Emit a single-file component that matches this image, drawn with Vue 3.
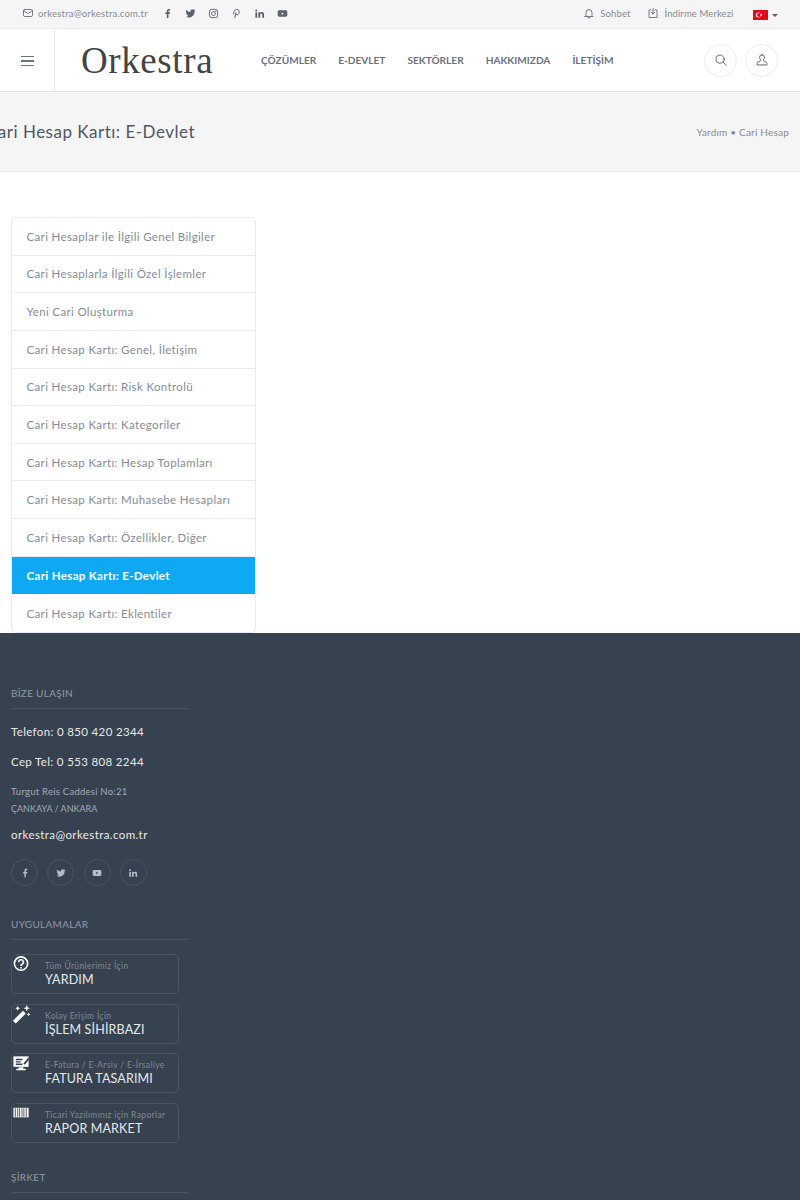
<template>
  <div class="page">
    <div class="topbar">
      <div class="top-left">
        <svg class="ico mail" viewBox="0 0 24 24"><rect x="3" y="5" width="18" height="14" rx="2.5" /><path d="M3.5 7.5 12 13l8.500-5.500" /></svg>
        <span class="top-mail">orkestra@orkestra.com.tr</span>
        <div class="top-social">
          <svg viewBox="0 0 24 24"><path class="fill" d="M14 22v-9h3l.5-3.600H14V7.200c0-1 .3-1.700 1.800-1.700h1.800V2.300C17.200 2.200 16.200 2 15 2c-2.700 0-4.500 1.600-4.500 4.700v2.700h-3V13h3v9z" /></svg>
          <svg viewBox="0 0 24 24"><path class="fill" d="M23 5.100c-.8.4-1.700.6-2.600.7.900-.6 1.600-1.400 2-2.500-.9.500-1.900.9-2.900 1.100a4.500 4.500 0 0 0-7.700 4.100C8 8.300 4.700 6.500 2.500 3.800a4.500 4.500 0 0 0 1.400 6c-.7 0-1.400-.2-2-.6 0 2.200 1.500 4 3.600 4.500-.7.200-1.400.2-2 .1.600 1.800 2.200 3.100 4.200 3.100A9 9 0 0 1 1 18.800 12.800 12.800 0 0 0 20.700 7.400c.9-.6 1.700-1.400 2.300-2.300z" /></svg>
          <svg class="line" viewBox="0 0 24 24"><rect x="3" y="3" width="18" height="18" rx="5" /><circle cx="12" cy="12" r="4.200" /><circle cx="17.200" cy="6.800" r=".6" /></svg>
          <svg class="line" viewBox="0 0 24 24"><path d="M8 22l3-12.500M6.200 14C4.500 8.500 8 3 12.500 3c3.800 0 5.800 2.800 5.500 6-.3 3.400-2.200 5.800-4.500 5.800-1.500 0-2.700-.9-3.300-2.200" /></svg>
          <svg viewBox="0 0 24 24"><path class="fill" d="M3 9h4v12H3zM5 3a2.200 2.200 0 1 1 0 4.400A2.200 2.200 0 0 1 5 3zM9.500 9h3.800v1.700c.6-1 1.900-2 3.900-2 4 0 4.800 2.600 4.800 6V21h-4v-5.500c0-1.400 0-3.100-1.900-3.100s-2.600 1.400-2.600 3V21h-4z" /></svg>
          <svg viewBox="0 0 24 24"><path class="fill" d="M5 5h14c2 0 3.500 1.500 3.500 3.500v7c0 2-1.500 3.500-3.500 3.500H5c-2 0-3.500-1.500-3.500-3.500v-7C1.500 6.500 3 5 5 5zm5 4v6l5-3z" fill-rule="evenodd" /></svg>
        </div>
      </div>
      <div class="top-right">
        <span class="top-link chat">
          <svg class="ico" viewBox="0 0 24 24"><path d="M6 17V11a6 6 0 0 1 12 0v6l2 2H4zM10 21.500h4" /></svg>
          Sohbet
        </span>
        <span class="top-link">
          <svg class="ico" viewBox="0 0 24 24"><path d="M8 6H4v15h16V6h-4M12 3v11M8.500 10.500 12 14l3.500-3.500" /></svg>
          İndirme Merkezi
        </span>
        <span class="lang">
          <svg class="flag" viewBox="0 0 15 10"><rect width="15" height="10" fill="#e30a17" /><circle cx="5.400" cy="5" r="2.500" fill="#fff" /><circle cx="6" cy="5" r="2" fill="#e30a17" /><circle cx="8.300" cy="5" r=".9" fill="#fff" /></svg>
          <i class="caret"></i>
        </span>
      </div>
    </div>

    <header class="header">
      <div class="burger">
        <span></span><span></span><span></span>
      </div>
      <div class="logo">Orkestra</div>
      <nav class="nav">
        <a v-for="item in navItems" :key="item">{{ item }}</a>
      </nav>
      <div class="header-actions">
        <button class="round">
          <svg class="ico" viewBox="0 0 24 24"><circle cx="10.500" cy="10.500" r="7" /><path d="m16 16 5 5" /></svg>
        </button>
        <button class="round">
          <svg class="ico" viewBox="0 0 24 24"><path d="M12 3a4.200 4.200 0 0 0-4.200 4.200c0 2 1 3.300 1.700 4.300.6 1 .2 2-1 2.500L5 15.500c-1 .5-1.500 1.200-1.500 2.500v2.500h17V18c0-1.300-.5-2-1.500-2.500L15.500 14c-1.200-.5-1.600-1.500-1-2.500.7-1 1.700-2.300 1.700-4.300A4.200 4.200 0 0 0 12 3z" /></svg>
        </button>
      </div>
    </header>

    <section class="title-bar">
      <h1>Cari Hesap Kartı: E-Devlet</h1>
      <div class="crumbs">Yardım <b>•</b> Cari Hesap</div>
    </section>

    <main class="content">
      <ul class="side-list">
        <li v-for="item in listItems" :key="item" :class="{ active: item === activeItem }">{{ item }}</li>
      </ul>
    </main>

    <footer class="footer">
      <div class="foot-col">
        <h4>BİZE ULAŞIN</h4>
        <p class="phone">Telefon: 0 850 420 2344</p>
        <p class="phone">Cep Tel: 0 553 808 2244</p>
        <p class="address">Turgut Reis Caddesi No:21<br /><span>ÇANKAYA / ANKARA</span></p>
        <p class="foot-mail">orkestra@orkestra.com.tr</p>
        <div class="foot-social">
          <span><svg viewBox="0 0 24 24"><path d="M14 22v-9h3l.5-3.600H14V7.200c0-1 .3-1.700 1.800-1.700h1.800V2.300C17.200 2.200 16.200 2 15 2c-2.700 0-4.500 1.600-4.500 4.700v2.700h-3V13h3v9z" /></svg></span>
          <span><svg viewBox="0 0 24 24"><path d="M23 5.100c-.8.4-1.700.6-2.600.7.900-.6 1.600-1.400 2-2.500-.9.500-1.900.9-2.900 1.100a4.500 4.500 0 0 0-7.700 4.100C8 8.300 4.700 6.500 2.500 3.800a4.500 4.500 0 0 0 1.400 6c-.7 0-1.400-.2-2-.6 0 2.200 1.500 4 3.600 4.500-.7.200-1.400.2-2 .1.600 1.800 2.200 3.100 4.200 3.100A9 9 0 0 1 1 18.800 12.800 12.800 0 0 0 20.700 7.400c.9-.6 1.700-1.400 2.300-2.300z" /></svg></span>
          <span><svg viewBox="0 0 24 24"><path fill-rule="evenodd" d="M5 5h14c2 0 3.500 1.500 3.500 3.500v7c0 2-1.500 3.500-3.500 3.500H5c-2 0-3.500-1.500-3.500-3.500v-7C1.500 6.500 3 5 5 5zm5 4v6l5-3z" /></svg></span>
          <span><svg viewBox="0 0 24 24"><path d="M3 9h4v12H3zM5 3a2.200 2.200 0 1 1 0 4.400A2.200 2.200 0 0 1 5 3zM9.500 9h3.800v1.700c.6-1 1.900-2 3.900-2 4 0 4.800 2.600 4.800 6V21h-4v-5.500c0-1.400 0-3.100-1.900-3.100s-2.600 1.400-2.600 3V21h-4z" /></svg></span>
        </div>

        <h4 class="apps-title">UYGULAMALAR</h4>
        <div class="apps">
          <div v-for="app in apps" :key="app.name" class="app">
            <svg class="app-ico" viewBox="0 0 20 20" v-html="app.icon"></svg>
            <small>{{ app.sub }}</small>
            <strong>{{ app.name }}</strong>
          </div>
        </div>

        <h4 class="company-title">ŞİRKET</h4>
      </div>
    </footer>
  </div>
</template>

<script setup>
const navItems = ['ÇÖZÜMLER', 'E-DEVLET', 'SEKTÖRLER', 'HAKKIMIZDA', 'İLETİŞİM']

const activeItem = 'Cari Hesap Kartı: E-Devlet'
const listItems = [
  'Cari Hesaplar ile İlgili Genel Bilgiler',
  'Cari Hesaplarla İlgili Özel İşlemler',
  'Yeni Cari Oluşturma',
  'Cari Hesap Kartı: Genel, İletişim',
  'Cari Hesap Kartı: Risk Kontrolü',
  'Cari Hesap Kartı: Kategoriler',
  'Cari Hesap Kartı: Hesap Toplamları',
  'Cari Hesap Kartı: Muhasebe Hesapları',
  'Cari Hesap Kartı: Özellikler, Diğer',
  'Cari Hesap Kartı: E-Devlet',
  'Cari Hesap Kartı: Eklentiler',
]

const apps = [
  {
    sub: 'Tüm Ürünlerimiz İçin',
    name: 'YARDIM',
    icon: '<circle cx="9.500" cy="9" r="7" fill="none" stroke="#fff" stroke-width="1.7"/><path d="M7 7.500a2.500 2.500 0 1 1 3.700 2.200c-.8.500-1.200.9-1.200 1.800" fill="none" stroke="#fff" stroke-width="1.700"/><circle cx="9.500" cy="13.500" r="1" fill="#fff"/>',
  },
  {
    sub: 'Kolay Erişim İçin',
    name: 'İŞLEM SİHİRBAZI',
    icon: '<path d="M1 16.500 11.500 6l3 3L4 19.500z" fill="#fff"/><path d="M15.500 0l1 2.300 2.300 1-2.300 1-1 2.300-1-2.300-2.300-1 2.300-1zM6 1l.8 1.700 1.700.8-1.700.8L6 6l-.8-1.700-1.700-.8 1.700-.8zM17.500 8l.6 1.300 1.300.6-1.300.6-.6 1.300-.6-1.300-1.300-.6 1.300-.6z" fill="#fff"/>',
  },
  {
    sub: 'E-Fatura / E-Arsiv / E-İrsaliye',
    name: 'FATURA TASARIMI',
    icon: '<path d="M1.500 2.500h16v11h-16z" fill="#fff"/><path d="M4 5h7v1.500H4zM4 7.500h5V9H4zM4 10h7v1.500H4z" fill="#36424f"/><path d="M12 10l5-6 1.500 1.200-5 6z" fill="#36424f"/><path d="M7 14h5v1.500h2.500V17h-10v-1.500H7z" fill="#fff"/>',
  },
  {
    sub: 'Ticari Yazılımınız için Raporlar',
    name: 'RAPOR MARKET',
    icon: '<rect x="1.500" y="4" width="16" height="10" fill="#fff"/><path d="M3.500 4.500v9M6 4.500v9M8 4.500v9M10.500 4.500v9M12.500 4.500v9M15 4.500v9" stroke="#555" stroke-width="1"/>',
  },
]
</script>

<style>
html,
body {
  margin: 0;
  background: #fff;
}
</style>

<style scoped>
.page {
  width: 800px;
  height: 1200px;
  overflow: hidden;
  display: flex;
  flex-direction: column;
  font-family: "Lato", "Noto Sans", sans-serif;
  color: #6c757d;
}

.ico {
  width: 12px;
  height: 12px;
  fill: none;
  stroke: #5e6673;
  stroke-width: 1.700;
  stroke-linecap: round;
  stroke-linejoin: round;
}

/* top bar */
.topbar {
  height: 29px;
  flex: none;
  box-sizing: border-box;
  background: #f5f5f5;
  border-bottom: 1px solid #ececec;
  padding: 0 22px 2px;
  display: flex;
  align-items: center;
  justify-content: space-between;
  font-size: 9.500px;
  color: #858c96;
}

.top-left,
.top-right {
  display: flex;
  align-items: center;
}

.top-mail {
  margin-left: 4px;
  letter-spacing: 0.2px;
}

.top-social {
  display: flex;
  align-items: center;
  gap: 12px;
  margin-left: 14px;
}

.top-social svg {
  width: 11px;
  height: 11px;
}

.top-social .fill {
  fill: #59626f;
}

.top-social .line {
  fill: none;
  stroke: #59626f;
  stroke-width: 2;
}

.top-link {
  display: flex;
  align-items: center;
  gap: 5px;
  margin-right: 19.500px;
  letter-spacing: 0.1px;
}

.top-link.chat {
  margin-right: 17px;
}

.lang {
  display: flex;
  align-items: center;
  gap: 4px;
  margin-top: 4px;
}

.flag {
  width: 15px;
  height: 10px;
}

.caret {
  width: 0;
  height: 0;
  border: 3px solid transparent;
  border-top-color: #59626f;
  border-bottom: 0;
}

/* header */
.header {
  height: 63px;
  flex: none;
  box-sizing: border-box;
  background: #fff;
  border-bottom: 1px solid #e3e3e3;
  display: flex;
  align-items: center;
}

.burger {
  width: 55px;
  height: 100%;
  box-sizing: border-box;
  border-right: 1px solid #ececec;
  display: flex;
  flex-direction: column;
  align-items: center;
  justify-content: center;
  gap: 3px;
  padding-top: 2px;
}

.burger span {
  width: 13px;
  height: 1.500px;
  background: #6a717c;
}

.logo {
  width: 206px;
  box-sizing: border-box;
  padding-left: 26px;
  font-family: "Liberation Serif", serif;
  font-size: 37px;
  color: #444;
  letter-spacing: 0.6px;
}

.nav {
  display: flex;
  gap: 22px;
  font-size: 10.100px;
  font-weight: 700;
  color: #6a717c;
}

.header-actions {
  margin-left: auto;
  margin-right: 22px;
  display: flex;
  gap: 8px;
}

.round {
  width: 33px;
  height: 33px;
  padding: 0;
  border: 1px solid #ececec;
  border-radius: 50%;
  background: #fff;
  display: flex;
  align-items: center;
  justify-content: center;
}

.round .ico {
  width: 14px;
  height: 14px;
}

/* title */
.title-bar {
  height: 80px;
  flex: none;
  box-sizing: border-box;
  background: #f5f5f5;
  border-bottom: 1px solid #e7e7e7;
  display: flex;
  align-items: center;
  justify-content: space-between;
  padding-right: 11px;
}

.title-bar h1 {
  margin: 0 0 0 -14px;
  font-size: 17px;
  font-weight: 400;
  color: #4e5763;
  letter-spacing: 0.5px;
}

.crumbs {
  font-size: 10px;
  color: #858c96;
  letter-spacing: 0.2px;
}

.crumbs b {
  font-weight: 400;
}

/* side list */
.content {
  flex: none;
  height: 461px;
  box-sizing: border-box;
  padding: 45px 0 0 11px;
}

.side-list {
  list-style: none;
  margin: 0;
  padding: 0;
  width: 245px;
  box-sizing: border-box;
  border: 1px solid #e9ecef;
  border-radius: 5px;
  overflow: hidden;
}

.side-list li {
  height: 37.650px;
  box-sizing: border-box;
  padding-left: 14.500px;
  display: flex;
  align-items: center;
  font-size: 11.500px;
  letter-spacing: 0.350px;
  color: #858c96;
  border-bottom: 1px solid #e9ecef;
}

.side-list li:last-child {
  border-bottom: 0;
}

.side-list li.active {
  background: #0ea9f2;
  color: #fff;
  font-weight: 700;
  margin: 0 -1px;
  padding-left: 15.500px;
  border-bottom: 0;
}

/* footer */
.footer {
  flex: 1;
  background: #36424f;
  padding: 54px 0 0 11px;
}

.foot-col {
  width: 178px;
}

.foot-col h4 {
  margin: 0;
  padding-bottom: 9px;
  border-bottom: 1px solid #4a5562;
  font-size: 10px;
  font-weight: 400;
  letter-spacing: 0.3px;
  color: #929aa5;
  line-height: 12px;
}

.phone {
  margin: 0;
  font-size: 11.500px;
  letter-spacing: 0.350px;
  color: #e6e9ec;
  line-height: 30px;
  white-space: nowrap;
}

.foot-col h4 + .phone {
  margin-top: 8px;
}

.address {
  margin: 6px 0 0;
  font-size: 9.500px;
  letter-spacing: 0.250px;
  line-height: 17px;
  color: #a3aab3;
  white-space: nowrap;
}

.address span {
  font-size: 9px;
  letter-spacing: 0;
}

.foot-mail {
  margin: 9px 0 0;
  font-size: 11.500px;
  letter-spacing: 0.400px;
  line-height: 17px;
  color: #e6e9ec;
}

.foot-social {
  display: flex;
  gap: 9.300px;
  margin-top: 16px;
}

.foot-social span {
  width: 27px;
  height: 27px;
  box-sizing: border-box;
  border: 1px solid #4a5562;
  border-radius: 50%;
  display: flex;
  align-items: center;
  justify-content: center;
}

.foot-social svg {
  width: 10px;
  height: 10px;
  fill: #b7bdc5;
}

.foot-col .apps-title {
  margin-top: 32px;
}

.apps {
  margin-top: 14px;
  display: flex;
  flex-direction: column;
  gap: 9.670px;
}

.app {
  position: relative;
  width: 168px;
  height: 40px;
  box-sizing: border-box;
  border: 1px solid #4a5562;
  border-radius: 5px;
  padding: 6px 0 0 33px;
}

.app-ico {
  position: absolute;
  left: 0;
  top: 0;
  width: 19px;
  height: 19px;
}

.app small {
  display: block;
  font-size: 8.500px;
  letter-spacing: 0.350px;
  line-height: 10px;
  color: #7f8894;
  white-space: nowrap;
}

.app strong {
  display: block;
  font-size: 12.500px;
  font-weight: 400;
  letter-spacing: 0.150px;
  line-height: 17px;
  color: #e6e9ec;
  white-space: nowrap;
}

.foot-col .company-title {
  margin-top: 28px;
}
</style>
